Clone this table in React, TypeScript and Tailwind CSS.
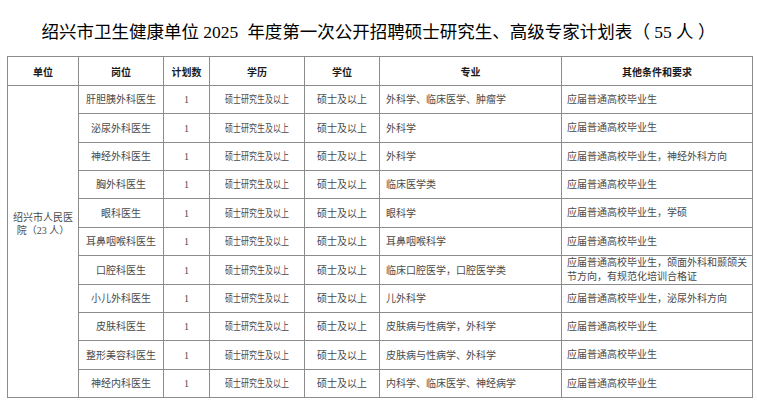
import React from 'react';

type Row = { post: string; major: string; other: string };

const rows: Row[] = [
  { post: '肝胆胰外科医生', major: '外科学、临床医学、肿瘤学', other: '应届普通高校毕业生' },
  { post: '泌尿外科医生', major: '外科学', other: '应届普通高校毕业生' },
  { post: '神经外科医生', major: '外科学', other: '应届普通高校毕业生，神经外科方向' },
  { post: '胸外科医生', major: '临床医学类', other: '应届普通高校毕业生' },
  { post: '眼科医生', major: '眼科学', other: '应届普通高校毕业生，学硕' },
  { post: '耳鼻咽喉科医生', major: '耳鼻咽喉科学', other: '应届普通高校毕业生' },
  { post: '口腔科医生', major: '临床口腔医学，口腔医学类', other: '应届普通高校毕业生，颌面外科和颞颌关节方向，有规范化培训合格证' },
  { post: '小儿外科医生', major: '儿外科学', other: '应届普通高校毕业生，泌尿外科方向' },
  { post: '皮肤科医生', major: '皮肤病与性病学，外科学', other: '应届普通高校毕业生' },
  { post: '整形美容科医生', major: '皮肤病与性病学、外科学', other: '应届普通高校毕业生' },
  { post: '神经内科医生', major: '内科学、临床医学、神经病学', other: '应届普通高校毕业生' },
];

// row heights so the 11 body rows fill 85 -> 397
const heights = ['h-[28px]', 'h-[29px]', 'h-[28px]', 'h-[28px]', 'h-[29px]', 'h-[28px]', 'h-[29px]', 'h-[28px]', 'h-[28px]', 'h-[29px]', 'h-[28px]'];

const cell = 'border border-[#8c8c8c] p-0 align-middle';
const headers = ['单位', '岗位', '计划数', '学历', '学位', '专业', '其他条件和要求'];

export default function App() {
  return (
    <div className="w-[757px] h-[403px] bg-white overflow-hidden pt-[22px] font-['Liberation_Serif','Noto_Sans_CJK_SC',sans-serif]">
      <h1 className="text-center text-[17.5px] leading-[20px] font-normal text-black mb-[14px] whitespace-nowrap">
        绍兴市卫生健康单位 2025<span className="ml-[9px]">年度第一次公开招聘硕士研究生、高级专家计划表</span><span>（ 55 人 ）</span>
      </h1>
      <div className="pl-[7px]">
        <table className="border-collapse table-fixed w-[745px] text-[10px] text-[#4a4a4a]">
          <colgroup>
            <col className="w-[71px]" />
            <col className="w-[85px]" />
            <col className="w-[46px]" />
            <col className="w-[95px]" />
            <col className="w-[75px]" />
            <col className="w-[182px]" />
            <col className="w-[191px]" />
          </colgroup>
          <thead>
            <tr className="h-[29px]">
              {headers.map((h) => (
                <th key={h} className={`${cell} text-center font-bold text-[#1a1a1a] font-['Noto_Sans_CJK_SC',sans-serif]`}>
                  {h}
                </th>
              ))}
            </tr>
          </thead>
          <tbody>
            {rows.map((r, i) => (
              <tr key={r.post} className={heights[i]}>
                {i === 0 && (
                  <td rowSpan={11} className={`${cell} text-center px-[5px] pb-[36px] leading-[13px]`}>
                    绍兴市人民医院（23 人）
                  </td>
                )}
                <td className={`${cell} text-center leading-[13px]`}>{r.post}</td>
                <td className={`${cell} text-center leading-[13px]`}>1</td>
                <td className={`${cell} text-center leading-[13px]`}>
                  <span className="inline-block scale-x-80 whitespace-nowrap">硕士研究生及以上</span>
                </td>
                <td className={`${cell} text-center leading-[13px]`}>硕士及以上</td>
                <td className={`${cell} px-[6px] leading-[13px]`}>{r.major}</td>
                <td className={`${cell} px-[5px] leading-[14px]`}>{r.other}</td>
              </tr>
            ))}
          </tbody>
        </table>
      </div>
    </div>
  );
}
